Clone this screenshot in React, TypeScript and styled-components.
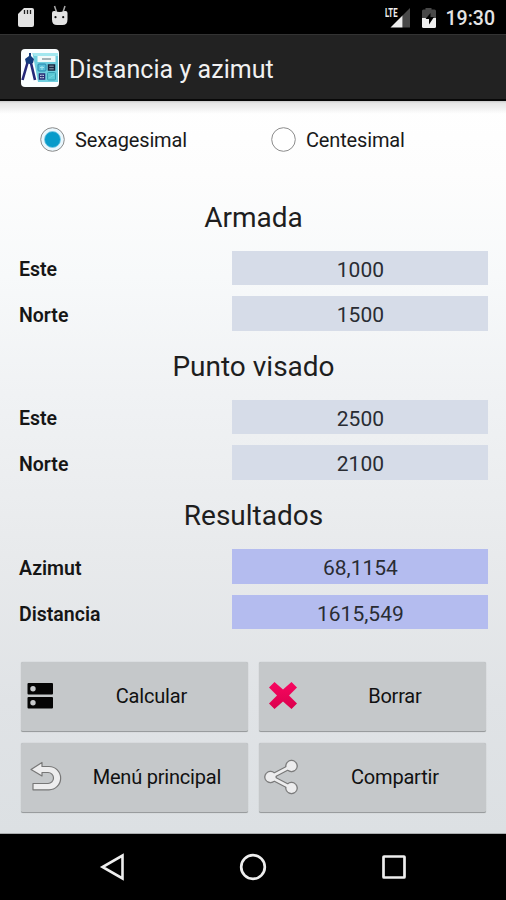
import React from "react";
import styled, { createGlobalStyle } from "styled-components";

const GlobalStyle = createGlobalStyle`
  * { box-sizing: border-box; }
  html, body { margin: 0; padding: 0; }
  body { background: #000; font-family: Roboto, "Liberation Sans", sans-serif; }
`;

const Screen = styled.div`
  display: flex;
  flex-direction: column;
  width: 506px;
  height: 900px;
  overflow: hidden;
  background: #000;
`;

const StatusBar = styled.header`
  display: flex;
  align-items: flex-start;
  justify-content: space-between;
  height: 34px;
  background: #000;
`;

const StatusGroup = styled.div`
  display: flex;
  align-items: flex-start;
`;

const Clock = styled.time`
  width: 60.5px;
  padding-top: 7px;
  color: #e4e4e4;
  font-size: 19.5px;
  font-weight: 500;
  line-height: 24px;
`;

const ActionBar = styled.div`
  display: flex;
  align-items: center;
  gap: 9px;
  height: 67px;
  padding: 2px 0 0 20px;
  background: #222;
  border-top: 1px solid #333;
  border-bottom: 2px solid #080808;
`;

const Title = styled.h1`
  margin: 3px 0 0;
  color: #f1f1f1;
  font-size: 25px;
  font-weight: 400;
  line-height: 30px;
  letter-spacing: 0.05px;
`;

const Content = styled.main`
  height: 733px;
  border-bottom: 1px solid #aaadaf;
  background:
    linear-gradient(#c9c9c9 0, #e6e6e6 2px, #f0f0f0 7px, rgba(255, 255, 255, 0) 13px),
    linear-gradient(#fff 0%, #fdfdfd 10%, #f7f9fa 24%, #f0f2f4 40%, #e8eaec 62%, #e0e3e6 82%, #dce0e3 100%);
`;

const RadioRow = styled.div`
  display: grid;
  grid-template-columns: 231px 1fr;
  height: 78px;
  padding: 25.5px 0 0 40px;
`;

const Radio = styled.label`
  display: flex;
  align-items: center;
  gap: 10px;
  height: 26px;
  color: #1a1a1a;
  font-size: 20px;
  letter-spacing: -0.15px;
`;

const Section = styled.section<{ $top: number }>`
  padding: ${(p) => p.$top}px 17px 0 19px;
`;

const Heading = styled.h2<{ $gap: number }>`
  height: 36px;
  margin: 0 0 ${(p) => p.$gap}px;
  padding-right: 1px;
  color: #1e1e1e;
  font-size: 28px;
  font-weight: 400;
  line-height: 36px;
  letter-spacing: 0;
  text-align: center;
`;

const FieldRow = styled.div`
  display: grid;
  grid-template-columns: 213.4px 256px;
  align-items: center;
  height: 34.5px;
  margin-bottom: 11.25px;
`;

const FieldLabel = styled.span`
  padding-top: 4px;
  color: #161616;
  font-size: 19.5px;
  font-weight: 600;
`;

const Field = styled.div<{ $result?: boolean }>`
  height: 34.5px;
  background: ${(p) => (p.$result ? "#b4bcef" : "#d6dce8")};
  color: #292c33;
  font-size: 21px;
  line-height: 38px;
  text-align: center;
`;

const Actions = styled.div`
  display: grid;
  grid-template-columns: 227px 227px;
  grid-auto-rows: 70px;
  gap: 11px;
  padding: 21px 0 0 21.4px;
`;

const ActionButton = styled.button<{ $inset: number }>`
  display: grid;
  grid-template-columns: ${(p) => p.$inset}px 1fr;
  align-items: center;
  padding: 0 9px 0 5px;
  border: 0;
  border-bottom: 1.5px solid #999c9e;
  border-radius: 2px;
  background: #c5c8ca;
  box-shadow: 0 0 1px #a0a3a5;
  color: #111;
  font-family: inherit;
  font-size: 20px;
  letter-spacing: -0.2px;
  text-align: center;
`;

const NavBar = styled.nav`
  display: grid;
  grid-template-columns: 141px 141px 141px;
  justify-content: center;
  justify-items: center;
  height: 66px;
  padding-top: 17px;
  background: #000;
`;

const StatusIcons = () => (
  <svg width="75" height="34" viewBox="0 0 75 34">
    <path d="M24 8h8q2 0 2 2v15q0 2-2 2H20q-2 0-2-2V14z" fill="#e3e3e3" />
    <path d="M24.5 10v4M27.5 10v4M30.5 10v4" stroke="#222" strokeWidth="1.3" />
    <path d="M54.500 6l2 6M65 6l-2 6" stroke="#aaa" strokeWidth="1.500" />
    <path d="M52 13q0-2 2-2h1q2 1 4.500 1T64.500 11h1q2 0 2 2v6.500q0 5.500-5 5.500h-5.500q-5 0-5-5.500z" fill="#e3e3e3" />
    <circle cx="55.500" cy="17.200" r="1.100" fill="#111" />
    <circle cx="63.200" cy="17.200" r="1.100" fill="#111" />
  </svg>
);

const LteLabel = styled.span`
  display: block;
  width: 14px;
  padding-top: 6px;
  color: #efefef;
  font-size: 12.5px;
  font-weight: 700;
  line-height: 13px;
  transform: scaleX(0.62);
  transform-origin: left center;
`;

const SignalIcon = () => (
  <svg width="46.500" height="34" viewBox="399 0 46.500 34">
    <path d="M402.500 15.500L410 8v19.500h-7.500z" fill="#484848" />
    <path d="M390.500 27.500L402.500 15.500v12z" fill="#eee" />
    <path d="M422 19v-8q0-1.500 1.500-1.500h2V8h6v1.500h3q1.500 0 1.500 1.500v8z" fill="#484848" />
    <path d="M422 18h14v8.500q0 1.500-1.500 1.500h-11q-1.500 0-1.500-1.500z" fill="#efefef" />
    <path d="M430.500 13l-5 6h3.500v5.500l5-7.500h-3.500z" fill="#000" />
  </svg>
);

const SignalBox = styled.div`
  height: 34px;
  svg { display: block; overflow: visible; }
`;

const AppIcon = () => (
  <svg width="40" height="40" viewBox="0 0 40 40">
    <rect x="1" y="1" width="38" height="38" rx="4" fill="#fafeff" />
    <path d="M12.500 5H38v29H18z" fill="#70cfdf" />
    <path d="M12.500 5H38v3H14z" fill="#a2e7ef" />
    <rect x="17.500" y="8" width="18" height="6" fill="#f2fafa" />
    <path d="M22 11h9" stroke="#8a9ba2" strokeWidth="1.500" />
    <rect x="18" y="16" width="8" height="7" rx="1" fill="#58bdd8" stroke="#2585ad" />
    <path d="M20 19.500h4M22 18v4" stroke="#a1e5ef" />
    <rect x="28.500" y="17" width="6" height="5" fill="#c4dce5" stroke="#16233d" strokeWidth="1.500" />
    <path d="M29 19.500h5" stroke="#17253f" strokeWidth="2" />
    <rect x="19.500" y="26" width="5" height="5" fill="#dff6fc" stroke="#292b75" strokeWidth="1.500" />
    <path d="M22 26.500v4M20 28.500h4" stroke="#292b75" />
    <rect x="27.500" y="24.500" width="8" height="7.500" rx="1" fill="#5bc8d5" stroke="#35a0b3" />
    <path d="M29 30l5-3" stroke="#74d7df" />
    <path d="M8 13L2.500 32M10.500 13l4.500 19" stroke="#252878" strokeWidth="2.600" fill="none" />
    <path d="M9 5h2v3l3 3-1 4-3 1-4-1-1-4 4-3z" fill="#123a7d" />
  </svg>
);

const RadioMark = ({ on }: { on?: boolean }) => (
  <svg width="25" height="25" viewBox="0 0 25 25">
    <circle cx="12.500" cy="12.500" r="11.800" fill={on ? "#eaf7fd" : "#fff"} stroke="#8c8c8c" strokeWidth="1" />
    {on && <circle cx="12.500" cy="12.500" r="8" fill="#079bca" stroke="#78c8e2" strokeWidth=".8" />}
  </svg>
);

const icons = {
  calculate: (
    <svg width="28" height="28" viewBox="0 0 28 28">
      <rect x="1.500" y="1" width="25.500" height="11.500" rx="1" fill="#050505" />
      <rect x="1.500" y="15" width="25.500" height="11.500" rx="1" fill="#050505" />
      <circle cx="7" cy="6.700" r="2.700" fill="#c8cacc" />
      <circle cx="7" cy="20.700" r="2.700" fill="#c8cacc" />
    </svg>
  ),
  clear: (
    <svg width="38" height="28" viewBox="0 0 38 28">
      <defs>
        <linearGradient id="clear-fill" x1="0" y1="0" x2="0" y2="1">
          <stop stopColor="#f80760" />
          <stop offset="1" stopColor="#db004d" />
        </linearGradient>
      </defs>
      <path d="M10.500 0L19 7.500l8.500-7.500L33 5.500l-8 8 8 8L27.500 27 19 19.500l-8.500 7.500L5 21.500l8-8-8-8z" fill="url(#clear-fill)" />
    </svg>
  ),
  back: (
    <svg width="36" height="32" viewBox="-0.500 0.500 36 32">
      <path d="M4.500 9L15.500 2v4h7a11.500 11.500 0 0 1 0 23.300H6.500v-6.300H21.500a5.500 5.500 0 0 0 0-11h-6v3.500z" fill="#ededee" stroke="#777" strokeWidth="1.200" strokeLinejoin="round" />
    </svg>
  ),
  share: (
    <svg width="36" height="37" viewBox="0.500 0.500 36 37">
      <g fill="#777" stroke="#777">
        <path d="M28 7.500L7 18.500l21 11" fill="none" strokeWidth="5" />
        <circle cx="28" cy="7.500" r="5.800" />
        <circle cx="7" cy="18.500" r="5.800" />
        <circle cx="28" cy="29.500" r="5.800" />
      </g>
      <path d="M28 7.500L7 18.500l21 11" fill="none" stroke="#ededee" strokeWidth="2.800" />
      <g fill="#ededee">
        <circle cx="28" cy="7.500" r="5.100" />
        <circle cx="7" cy="18.500" r="5.100" />
        <circle cx="28" cy="29.500" r="5.100" />
      </g>
    </svg>
  ),
};

const sections = [
  { title: "Armada", top: 21, gap: 14.5, rows: [["Este", "1000"], ["Norte", "1500"]] },
  { title: "Punto visado", top: 7, gap: 14.5, rows: [["Este", "2500"], ["Norte", "2100"]] },
  { title: "Resultados", top: 7, gap: 15.2, result: true, rows: [["Azimut", "68,1154"], ["Distancia", "1615,549"]] },
];

export default function App() {
  return (
    <Screen>
      <GlobalStyle />
      <StatusBar>
        <StatusIcons />
        <StatusGroup>
          <LteLabel>LTE</LteLabel>
          <SignalBox><SignalIcon /></SignalBox>
          <Clock>19:30</Clock>
        </StatusGroup>
      </StatusBar>
      <ActionBar>
        <AppIcon />
        <Title>Distancia y azimut</Title>
      </ActionBar>
      <Content>
        <RadioRow>
          <Radio><RadioMark on />Sexagesimal</Radio>
          <Radio><RadioMark />Centesimal</Radio>
        </RadioRow>
        {sections.map((section) => (
          <Section key={section.title} $top={section.top}>
            <Heading $gap={section.gap}>{section.title}</Heading>
            {section.rows.map(([label, value]) => (
              <FieldRow key={label}>
                <FieldLabel>{label}</FieldLabel>
                <Field $result={section.result}>{value}</Field>
              </FieldRow>
            ))}
          </Section>
        ))}
        <Actions>
          <ActionButton $inset={37}>{icons.calculate}<span>Calcular</span></ActionButton>
          <ActionButton $inset={48}>{icons.clear}<span>Borrar</span></ActionButton>
          <ActionButton $inset={48}>{icons.back}<span>Menú principal</span></ActionButton>
          <ActionButton $inset={48}>{icons.share}<span>Compartir</span></ActionButton>
        </Actions>
      </Content>
      <NavBar>
        <svg width="30" height="32" viewBox="0 0 30 32">
          <path d="M25.500 4.500v23L5.500 16z" fill="none" stroke="#eee" strokeWidth="2.600" strokeLinejoin="miter" />
        </svg>
        <svg width="32" height="32" viewBox="0 0 32 32">
          <circle cx="16" cy="16" r="11.800" fill="none" stroke="#eee" strokeWidth="2.700" />
        </svg>
        <svg width="32" height="32" viewBox="0 0 32 32">
          <rect x="5.500" y="5.500" width="21" height="21" rx=".5" fill="none" stroke="#eee" strokeWidth="2.700" />
        </svg>
      </NavBar>
    </Screen>
  );
}
